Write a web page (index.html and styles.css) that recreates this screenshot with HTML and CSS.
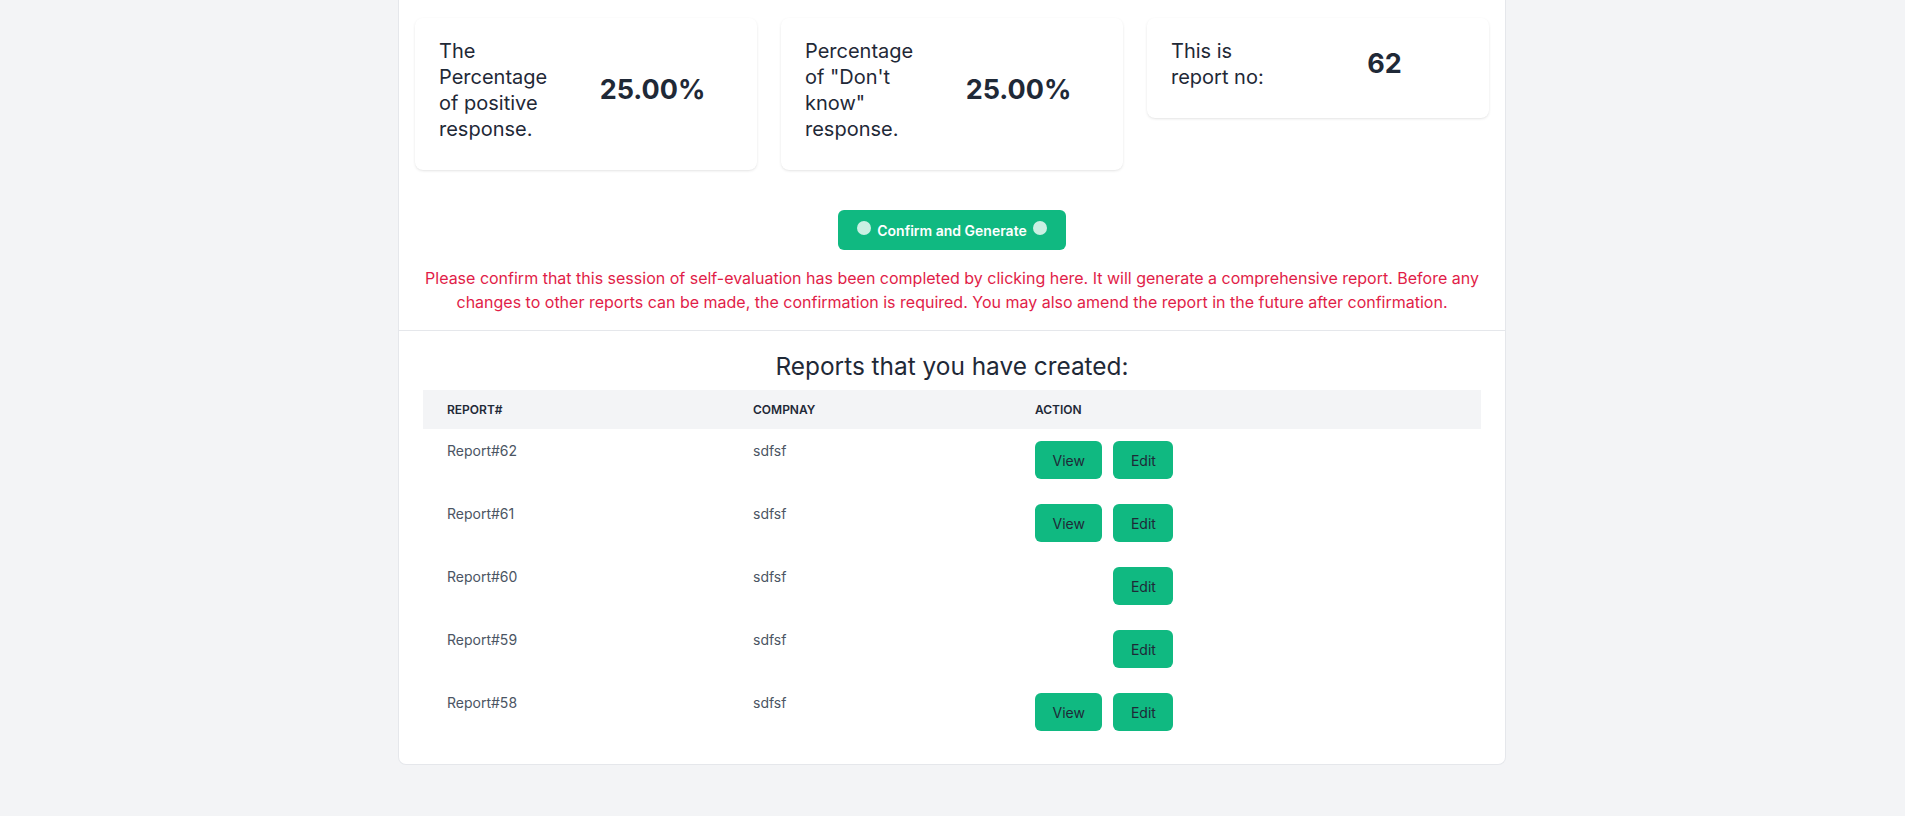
FILE: index.html
```html
<!DOCTYPE html>
<html lang="en">
<head>
<meta charset="utf-8">
<title>Reports</title>
<link rel="stylesheet" href="styles.css">
</head>
<body>
<main class="page">
  <section class="stats">
    <div class="card">
      <div class="card-label">The Percentage of positive response.</div>
      <div class="card-value">25.00%</div>
    </div>
    <div class="card">
      <div class="card-label">Percentage of "Don't know" response.</div>
      <div class="card-value">25.00%</div>
    </div>
    <div class="card">
      <div class="card-label">This is report no:</div>
      <div class="card-value">62</div>
    </div>
  </section>

  <section class="confirm">
    <button class="btn-confirm" type="button"><span class="dot"></span>Confirm and Generate<span class="dot"></span></button>
    <p class="notice">Please confirm that this session of self-evaluation has been completed by clicking here. It will generate a comprehensive report. Before any changes to other reports can be made, the confirmation is required. You may also amend the report in the future after confirmation.</p>
  </section>

  <section class="reports">
    <h2 class="reports-title">Reports that you have created:</h2>
    <table class="reports-table">
      <thead>
        <tr><th class="col-report">Report#</th><th class="col-company">Compnay</th><th>Action</th></tr>
      </thead>
      <tbody>
        <tr><td>Report#62</td><td>sdfsf</td><td><div class="actions"><button class="btn" type="button">View</button><button class="btn" type="button">Edit</button></div></td></tr>
        <tr><td>Report#61</td><td>sdfsf</td><td><div class="actions"><button class="btn" type="button">View</button><button class="btn" type="button">Edit</button></div></td></tr>
        <tr><td>Report#60</td><td>sdfsf</td><td><div class="actions"><button class="btn is-hidden" type="button">View</button><button class="btn" type="button">Edit</button></div></td></tr>
        <tr><td>Report#59</td><td>sdfsf</td><td><div class="actions"><button class="btn is-hidden" type="button">View</button><button class="btn" type="button">Edit</button></div></td></tr>
        <tr><td>Report#58</td><td>sdfsf</td><td><div class="actions"><button class="btn" type="button">View</button><button class="btn" type="button">Edit</button></div></td></tr>
      </tbody>
    </table>
  </section>
</main>
</body>
</html>
```

FILE: styles.css
```css
* { box-sizing: border-box; }

html, body {
  margin: 0;
  padding: 0;
}

body {
  background: #f3f4f6;
  font-family: "Inter", "Liberation Sans", sans-serif;
  color: #1f2937;
  min-height: 816px;
}

.page {
  width: 1108px;
  margin-left: calc(50% - 554.5px);
  background: #ffffff;
  border: 1px solid #e5e7eb;
  border-top: 0;
  border-radius: 0 0 8px 8px;
  padding-bottom: 20px;
}

.stats {
  display: grid;
  grid-template-columns: repeat(3, 1fr);
  gap: 24px;
  align-items: start;
  padding: 18px 16px 0;
}

.card {
  display: flex;
  align-items: center;
  padding: 20px 24px 28px;
  background: #ffffff;
  border-radius: 8px;
  box-shadow: 0 1px 3px 0 rgba(0, 0, 0, 0.09), 0 1px 2px -1px rgba(0, 0, 0, 0.08);
}

.card-label {
  width: 117px;
  flex: none;
  font-size: 20px;
  line-height: 26px;
  color: #1f2937;
}

.card-value {
  flex: 1;
  margin-left: 16px;
  text-align: center;
  font-size: 27px;
  line-height: 36px;
  font-weight: 700;
  color: #1f2937;
}

.confirm {
  display: flex;
  flex-direction: column;
  align-items: center;
  padding: 40px 24px 16px;
  border-bottom: 1px solid #e5e7eb;
}

.btn-confirm {
  display: inline-flex;
  align-items: center;
  gap: 6px;
  height: 40px;
  padding: 0 19px;
  border: 0;
  border-radius: 6px;
  background: #10b981;
  color: #ffffff;
  font-family: inherit;
  font-size: 14px;
  font-weight: 600;
}

.dot {
  width: 14px;
  height: 14px;
  border-radius: 50%;
  background: rgba(255, 255, 255, 0.78);
  margin-top: -5px;
}

.notice {
  margin: 16px 0 0;
  font-size: 16px;
  line-height: 24px;
  color: #e11d48;
  text-align: center;
}

.reports {
  padding: 19px 24px 0;
}

.reports-title {
  margin: 0 0 8px;
  text-align: center;
  font-size: 24.4px;
  line-height: 32px;
  font-weight: 400;
  color: #1f2937;
}

.reports-table {
  width: 100%;
  border-collapse: collapse;
}

.reports-table thead tr {
  background: #f3f4f6;
}

.reports-table th {
  text-align: left;
  padding: 12px 24px;
  font-size: 12px;
  line-height: 15px;
  font-weight: 600;
  text-transform: uppercase;
  color: #1f2937;
}

.col-report { width: 306px; }
.col-company { width: 282px; }

.reports-table td {
  vertical-align: top;
  padding: 12px 24px 13px;
  font-size: 14px;
  line-height: 20px;
  color: #4b5563;
}

.actions {
  display: flex;
  gap: 11px;
}

.btn {
  height: 38px;
  padding: 0 17.5px;
  border: 0;
  border-radius: 6px;
  background: #10b981;
  color: #1f2937;
  font-family: inherit;
  font-size: 14px;
  font-weight: 400;
}

.btn.is-hidden {
  visibility: hidden;
}
```
